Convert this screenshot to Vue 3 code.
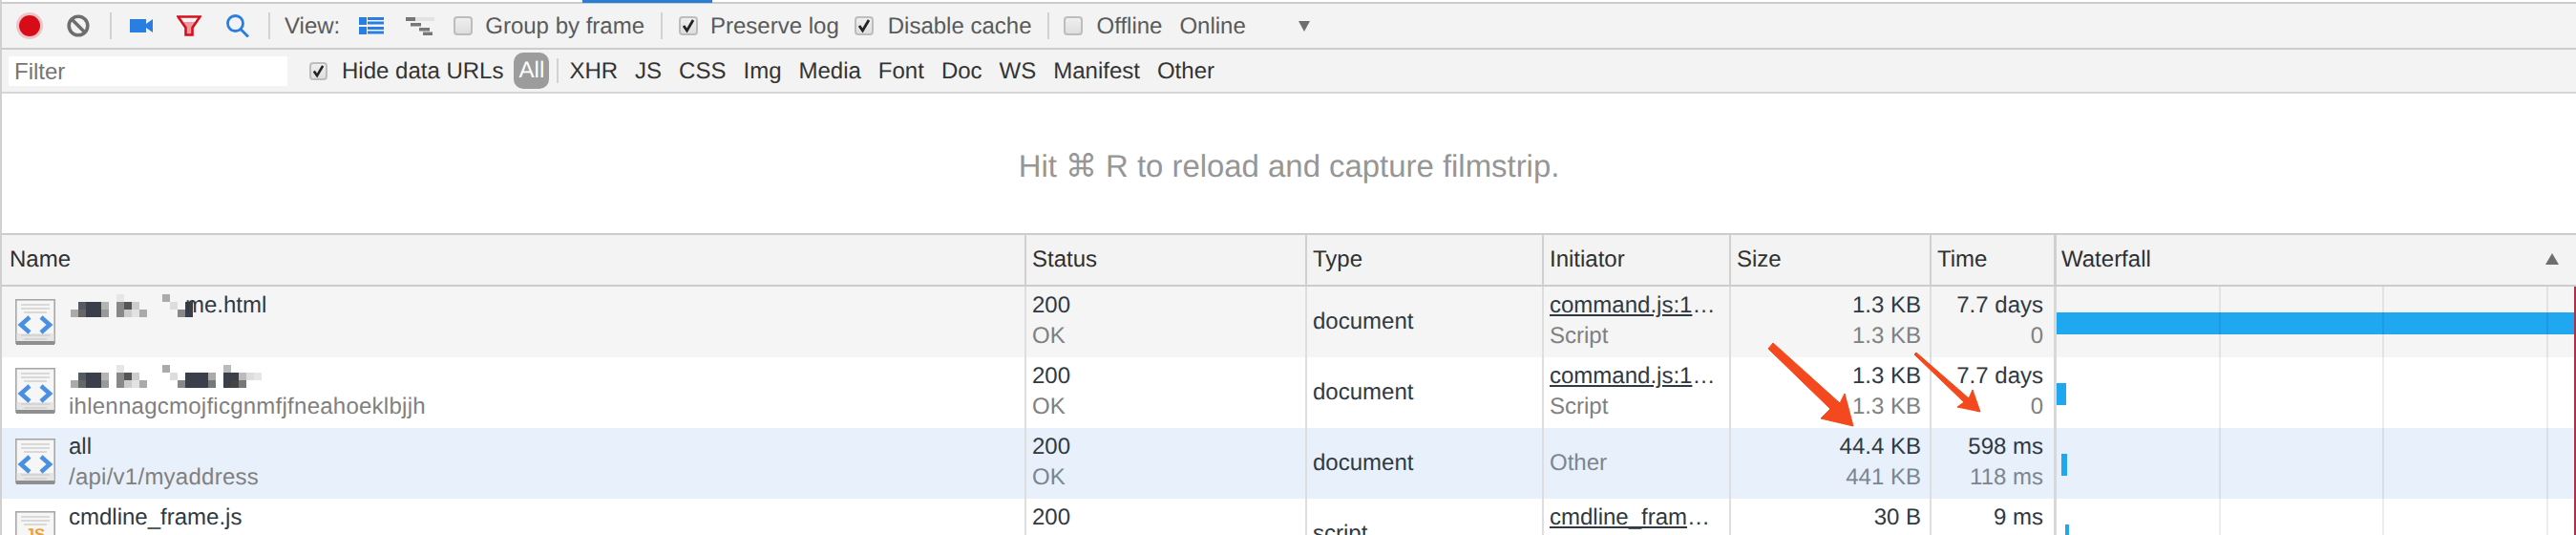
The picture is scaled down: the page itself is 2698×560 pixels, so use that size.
<template>
  <div class="devtools">
    <div class="tab-strip"><div class="tab-marker"></div></div>

    <div class="toolbar">
      <svg class="rec" width="30" height="30" viewBox="0 0 30 30">
        <circle cx="15" cy="15" r="14" fill="#e0262e" opacity=".22" />
        <circle cx="15" cy="15" r="11" fill="#d80c18" />
      </svg>
      <svg class="clear" width="26" height="26" viewBox="0 0 26 26">
        <circle cx="13" cy="13" r="9.8" fill="none" stroke="#6e6e6e" stroke-width="3.6" />
        <path d="M6 6l14 14" stroke="#6e6e6e" stroke-width="3.6" />
      </svg>
      <div class="sep sep-a"></div>
      <svg class="cam" width="24" height="14" viewBox="0 0 24 14">
        <path d="M0 0h17v5l7-5v14l-7-5v5H0z" fill="#2a7de1" />
      </svg>
      <svg class="funnel" width="26" height="22" viewBox="0 0 26 22">
        <path d="M6 7h14l-4 7v6h-6v-6z" fill="#ef9aa0" />
        <path d="M1.500 1.500h23L16.500 13v7.500h-7V13z" fill="none" stroke="#d8101e" stroke-width="2.600" />
      </svg>
      <svg class="lens" width="24" height="24" viewBox="0 0 24 24">
        <circle cx="9.500" cy="9.500" r="8" fill="none" stroke="#2a7de1" stroke-width="2.800" />
        <path d="M15 15.500l8 8" stroke="#2a7de1" stroke-width="3" />
      </svg>
      <div class="sep sep-b"></div>
      <span class="label view-label">View:</span>
      <svg class="list-ico" width="26" height="18" viewBox="0 0 26 18">
        <path d="M0 0h8v8H0zM0 10h8v8H0z" fill="#2a7de1" />
        <path d="M9 0h17v3H9zM9 4.500h17v3H9zM9 10h17v3H9zM9 14.500h17v3H9z" fill="#2a7de1" />
      </svg>
      <svg class="tree-ico" width="30" height="19" viewBox="0 0 30 19">
        <rect x="10" y="0" width="20" height="4" fill="#e2e2e2" />
        <rect x="0" y="0" width="10" height="4" fill="#777" />
        <rect x="5" y="6" width="11" height="3.500" fill="#777" />
        <rect x="14" y="11" width="11" height="3.500" fill="#777" />
        <rect x="18" y="15.500" width="10" height="3.500" fill="#777" />
      </svg>
      <span class="box box-group"></span>
      <span class="label box-text">Group by frame</span>
      <div class="sep sep-c"></div>
      <span class="box box-preserve"><svg width="16" height="16" viewBox="0 0 16 16"><path d="M3 8l3.500 5L13 2" fill="none" stroke="#222" stroke-width="2.800" /></svg></span>
      <span class="label box-text">Preserve log</span>
      <span class="box box-cache"><svg width="16" height="16" viewBox="0 0 16 16"><path d="M3 8l3.500 5L13 2" fill="none" stroke="#222" stroke-width="2.800" /></svg></span>
      <span class="label cache-text">Disable cache</span>
      <div class="sep sep-c"></div>
      <span class="box box-offline"></span>
      <span class="label offline-text">Offline</span>
      <span class="label online-text">Online</span>
      <span class="caret"></span>
    </div>

    <div class="filterbar">
      <input class="filter" placeholder="Filter" />
      <span class="box box-hide"><svg width="15" height="15" viewBox="0 0 16 16"><path d="M3 8l3.500 5L13 2" fill="none" stroke="#222" stroke-width="2.800" /></svg></span>
      <span class="hide-text">Hide data URLs</span>
      <span class="all-pill">All</span>
      <div class="sep sep-all"></div>
      <div class="types">
        <span v-for="t in types" :key="t">{{ t }}</span>
      </div>
    </div>

    <div class="filmstrip">Hit ⌘ R to reload and capture filmstrip.</div>

    <div class="table">
      <div class="grid head">
        <div class="cell name-head">Name</div>
        <div class="cell">Status</div>
        <div class="cell">Type</div>
        <div class="cell">Initiator</div>
        <div class="cell">Size</div>
        <div class="cell">Time</div>
        <div class="cell fall-head">Waterfall<span class="sort-up"></span></div>
      </div>

      <div v-for="row in rows" :key="row.id" class="grid row" :class="row.tone">
        <div class="name-cell">
          <svg class="doc" :class="{ raised: row.raised }" width="42" height="49" viewBox="0 0 42 49">
            <rect x=".8" y=".8" width="40.400" height="45.400" fill="#f6f6f6" stroke="#a8a8a8" stroke-width="1.600" />
            <rect x="1.600" y="36" width="38.800" height="9" fill="#e6e6e6" />
            <rect x="1" y="44" width="40" height="4" fill="#8f8f8f" />
            <path d="M6 6h30M6 10h30M9 14h24M6 38h30M9 42h24" stroke="#cfcfcf" stroke-width="1.400" />
            <template v-if="row.kind === 'html'">
              <path d="M15 19l-9 8 9 8M27 19l9 8-9 8" fill="none" stroke="#4a90e2" stroke-width="4.600" />
            </template>
            <text v-else x="21" y="30" text-anchor="middle" class="js-mark">JS</text>
          </svg>
          <div class="name-text">
            <div class="line-one">
              <svg v-if="row.mosaic" class="mosaic" :width="row.mosaicWidth" height="24" :viewBox="`0 0 ${row.mosaicWidth} 24`">
                <rect v-for="(p, i) in row.mosaic" :key="i" :x="p[0] * 8" :y="p[1] * 8" width="8" height="8" :fill="p[2]" />
              </svg>
              <span v-if="row.name" :class="{ 'after-mosaic': row.mosaic }">{{ row.name }}</span>
            </div>
            <div v-if="row.path" class="line-two">{{ row.path }}</div>
            <div v-if="row.smear" class="smear"></div>
          </div>
        </div>
        <div class="cell-body">
          <div>{{ row.status }}</div>
          <div class="sub">{{ row.statusText }}</div>
        </div>
        <div class="cell-body mid">{{ row.type }}</div>
        <div class="cell-body" :class="{ mid: !row.link }">
          <div v-if="row.link"><span class="link">{{ row.link }}</span>…</div>
          <div class="sub">{{ row.initiator }}</div>
        </div>
        <div class="cell-body size">
          <div>{{ row.size }}</div>
          <div class="sub">{{ row.size2 }}</div>
        </div>
        <div class="cell-body time">
          <div>{{ row.time }}</div>
          <div class="sub">{{ row.time2 }}</div>
        </div>
        <div class="fall-cell">
          <div class="bar" :style="{ left: `${row.barLeft}px`, width: `${row.barWidth}px` }"></div>
          <div v-for="x in gridLines" :key="x" class="tick" :style="{ left: `${x}px` }"></div>
          <div class="load-line"></div>
        </div>
      </div>

      <!-- red annotation arrows pasted over the screenshot -->
      <svg class="arrows" width="2698" height="560" viewBox="0 0 2698 560">
        <path d="M1852 365L1857 359L1927 422L1932 412L1941 446L1907 438L1917 428Z" fill="#f4481e" stroke="#f4481e" stroke-width="1" stroke-linejoin="round" />
        <path d="M2005 371L2007 369L2062 417L2066 408L2074 431L2050 426L2057 421Z" fill="#f4481e" stroke="#f4481e" stroke-width="1" stroke-linejoin="round" />
      </svg>
    </div>
  </div>
</template>

<script setup>
const types = ['XHR', 'JS', 'CSS', 'Img', 'Media', 'Font', 'Doc', 'WS', 'Manifest', 'Other']

// waterfall divider positions, relative to the waterfall cell
const gridLines = [170, 341, 513]

const DARK = '#3a3f4a'
const MOSAIC_HEAD = [
  [6, 0, '#e6e6e6'], [12, 0, '#aaa'],
  [1, 1, '#555a62'], [2, 1, DARK], [3, 1, DARK], [4, 1, '#b4b4b4'],
  [6, 1, '#888'], [7, 1, '#555'], [8, 1, '#ccc'], [13, 1, '#ddd'],
  [0, 2, '#aaa'], [1, 2, '#666'], [2, 2, DARK], [3, 2, DARK], [4, 2, '#999'],
  [6, 2, '#888'], [7, 2, '#ccc'], [8, 2, '#e2e2e2'], [9, 2, '#aaa'], [14, 2, '#888'],
]

const rows = [
  {
    id: 1, tone: 'grey', kind: 'html',
    mosaic: [...MOSAIC_HEAD, [15, 1, DARK], [15, 2, DARK]], mosaicWidth: 128, name: 'me.html',
    status: '200', statusText: 'OK', type: 'document',
    link: 'command.js:1', initiator: 'Script',
    size: '1.3 KB', size2: '1.3 KB', time: '7.7 days', time2: '0',
    barLeft: 0, barWidth: 542,
  },
  {
    id: 2, tone: 'plain', kind: 'html', raised: true, smear: true,
    mosaic: [
      ...MOSAIC_HEAD,
      [20, 0, '#bbb'],
      [15, 1, DARK], [16, 1, DARK], [17, 1, DARK], [18, 1, '#aaa'],
      [20, 1, DARK], [21, 1, DARK], [22, 1, '#bbb'], [23, 1, '#ddd'], [24, 1, '#e6e6e6'],
      [15, 2, DARK], [16, 2, DARK], [17, 2, DARK], [18, 2, '#777'],
      [20, 2, DARK], [21, 2, '#444'], [22, 2, '#777'],
    ],
    mosaicWidth: 208, path: 'ihlennagcmojficgnmfjfneahoeklbjjh',
    status: '200', statusText: 'OK', type: 'document',
    link: 'command.js:1', initiator: 'Script',
    size: '1.3 KB', size2: '1.3 KB', time: '7.7 days', time2: '0',
    barLeft: 0, barWidth: 10,
  },
  {
    id: 3, tone: 'blue', kind: 'html', raised: true,
    name: 'all', path: '/api/v1/myaddress',
    status: '200', statusText: 'OK', type: 'document',
    link: '', initiator: 'Other',
    size: '44.4 KB', size2: '441 KB', time: '598 ms', time2: '118 ms',
    barLeft: 5, barWidth: 6,
  },
  {
    id: 4, tone: 'plain', kind: 'js',
    name: 'cmdline_frame.js',
    status: '200', statusText: '', type: 'script',
    link: 'cmdline_fram', initiator: '',
    size: '30 B', size2: '', time: '9 ms', time2: '',
    barLeft: 9, barWidth: 4,
  },
]
</script>

<style>
html, body {
  margin: 0;
  background: #fff;
  overflow: hidden;
}
</style>

<style scoped>
.devtools {
  width: 2698px;
  height: 560px;
  box-sizing: border-box;
  border-left: 2px solid #d0d0d0;
  overflow: hidden;
  font-family: "Liberation Sans", "DejaVu Sans", sans-serif;
  font-size: 24px;
  text-rendering: geometricPrecision;
  color: #303942;
  background: #fff;
}

.tab-strip {
  height: 4px;
  box-sizing: border-box;
  border-bottom: 2px solid #ccc;
  margin-left: -2px;
}
.tab-marker {
  width: 136px;
  height: 3px;
  margin-left: 610px;
  background: #2a7fd5;
}

.toolbar {
  display: flex;
  align-items: center;
  height: 46px;
  background: #f3f3f3;
  border-bottom: 2px solid #ccc;
  flex-shrink: 0;
}
.toolbar svg { flex-shrink: 0; }
.rec { margin-left: 14px; }
.clear { margin-left: 23px; }
.sep {
  width: 2px;
  height: 28px;
  background: #d2d2d2;
  flex-shrink: 0;
}
.sep-a { margin-left: 20px; }
.cam { margin-left: 19px; }
.funnel { margin-left: 25px; }
.lens { margin-left: 26px; }
.sep-b { margin-left: 20px; }
.label { color: #5a5a5a; white-space: nowrap; padding-top: 2px; }
.view-label { margin-left: 15px; }
.list-ico { margin-left: 20px; }
.tree-ico { margin-left: 23px; }
.box-group { margin-left: 20px; }
.box-text { margin-left: 13px; }
.sep-c { margin-left: 17px; }
.box-preserve { margin-left: 17px; }
.box-cache { margin-left: 16px; }
.cache-text { margin-left: 15px; }
.box-offline { margin-left: 15px; }
.offline-text { margin-left: 14px; }
.online-text { margin-left: 18px; }
.caret {
  margin-left: 55px;
  width: 0;
  height: 0;
  border-left: 6px solid transparent;
  border-right: 6px solid transparent;
  border-top: 11px solid #6e6e6e;
}

.box {
  display: flex;
  align-items: center;
  justify-content: center;
  box-sizing: border-box;
  width: 20px;
  height: 20px;
  border: 2px solid #bdbdbd;
  border-radius: 4px;
  background: linear-gradient(#efefef, #dedede);
  flex-shrink: 0;
}

.filterbar {
  display: flex;
  align-items: center;
  height: 44px;
  background: #f3f3f3;
  border-bottom: 2px solid #d6d6d6;
}
.filter {
  width: 292px;
  height: 31px;
  margin-left: 7px;
  padding: 2px 6px 0;
  box-sizing: border-box;
  border: 0;
  outline: 0;
  background: #fff;
  font: inherit;
}
.filter::placeholder { color: #757575; opacity: 1; }
.box-hide { margin-left: 23px; width: 19px; height: 19px; }
.hide-text { margin-left: 15px; padding-top: 2px; color: #333; white-space: nowrap; }
.all-pill {
  display: flex;
  align-items: center;
  justify-content: center;
  width: 37px;
  height: 38px;
  margin-left: 11px;
  border-radius: 10px;
  background: #9c9c9c;
  color: #fff;
}
.sep-all { margin-left: 8px; height: 26px; }
.types {
  display: flex;
  gap: 18px;
  margin-left: 11px;
  padding-top: 2px;
  color: #333;
}

.filmstrip {
  display: flex;
  align-items: center;
  justify-content: center;
  box-sizing: border-box;
  height: 148px;
  padding-top: 4px;
  background: #fff;
  color: #969696;
  font-size: 32.900px;
  border-bottom: 2px solid #ccc;
}

.table { position: relative; }
.grid {
  display: grid;
  grid-template-columns: 1071px 294px 248px 196px 210px 130px 547px;
}
.head {
  height: 52px;
  background: #f3f3f3;
  border-bottom: 2px solid #ccc;
}
.cell {
  display: flex;
  align-items: center;
  box-sizing: border-box;
  padding-left: 6px;
  border-left: 2px solid #d0d0d0;
  white-space: nowrap;
  color: #303030;
}
.name-head { border-left: 0; padding-left: 8px; }
.fall-head { position: relative; border-left-width: 3px; padding-left: 5px; }
.sort-up {
  position: absolute;
  right: 18px;
  top: 19px;
  width: 0;
  height: 0;
  border-left: 7px solid transparent;
  border-right: 7px solid transparent;
  border-bottom: 12px solid #6e6e6e;
}

.row { height: 74px; }
.grey { background: #f5f5f5; }
.plain { background: #fff; }
.blue { background: #e8f1fb; }

.name-cell {
  display: flex;
  align-items: center;
  gap: 14px;
  padding-left: 14px;
  min-width: 0;
}
.doc { flex-shrink: 0; }
.doc.raised { margin-top: -4px; }
.js-mark {
  font-size: 17px;
  font-weight: 700;
  fill: #f0a030;
}
.name-text {
  position: relative;
  align-self: flex-start;
  padding-top: 4px;
  min-width: 0;
}
.line-one {
  display: flex;
  align-items: center;
  height: 32px;
  white-space: nowrap;
}
.line-two {
  height: 32px;
  line-height: 32px;
  color: #808080;
  letter-spacing: 0.25px;
  white-space: nowrap;
}
.mosaic { margin-left: 2px; flex-shrink: 0; }
.after-mosaic { margin-left: -8px; }
.smear {
  position: absolute;
  left: 0;
  top: 35px;
  width: 222px;
  height: 7px;
  background: #fff;
}

.cell-body {
  display: flex;
  flex-direction: column;
  box-sizing: border-box;
  padding: 4px 0 0 6px;
  border-left: 2px solid #dedede;
  line-height: 32px;
  white-space: nowrap;
  overflow: hidden;
}
.cell-body.mid { justify-content: center; padding-top: 0; }
.sub { color: #808080; }
.blue .sub { color: #7c8590; }
.link { text-decoration: underline; }
.size { align-items: flex-end; padding-right: 9px; }
.time { align-items: flex-end; padding-right: 11px; }

.fall-cell {
  position: relative;
  border-left: 3px solid #d8d8d8;
  overflow: hidden;
}
.bar {
  position: absolute;
  top: 27px;
  height: 23px;
  background: #1fa7ef;
}
.tick {
  position: absolute;
  top: 0;
  bottom: 0;
  width: 2px;
  background: rgba(0, 0, 0, 0.07);
}
.load-line {
  position: absolute;
  top: 0;
  bottom: 0;
  left: 542px;
  width: 2px;
  background: #a8324a;
}

.arrows {
  position: absolute;
  left: -2px;
  top: -246px;
  pointer-events: none;
}
</style>
